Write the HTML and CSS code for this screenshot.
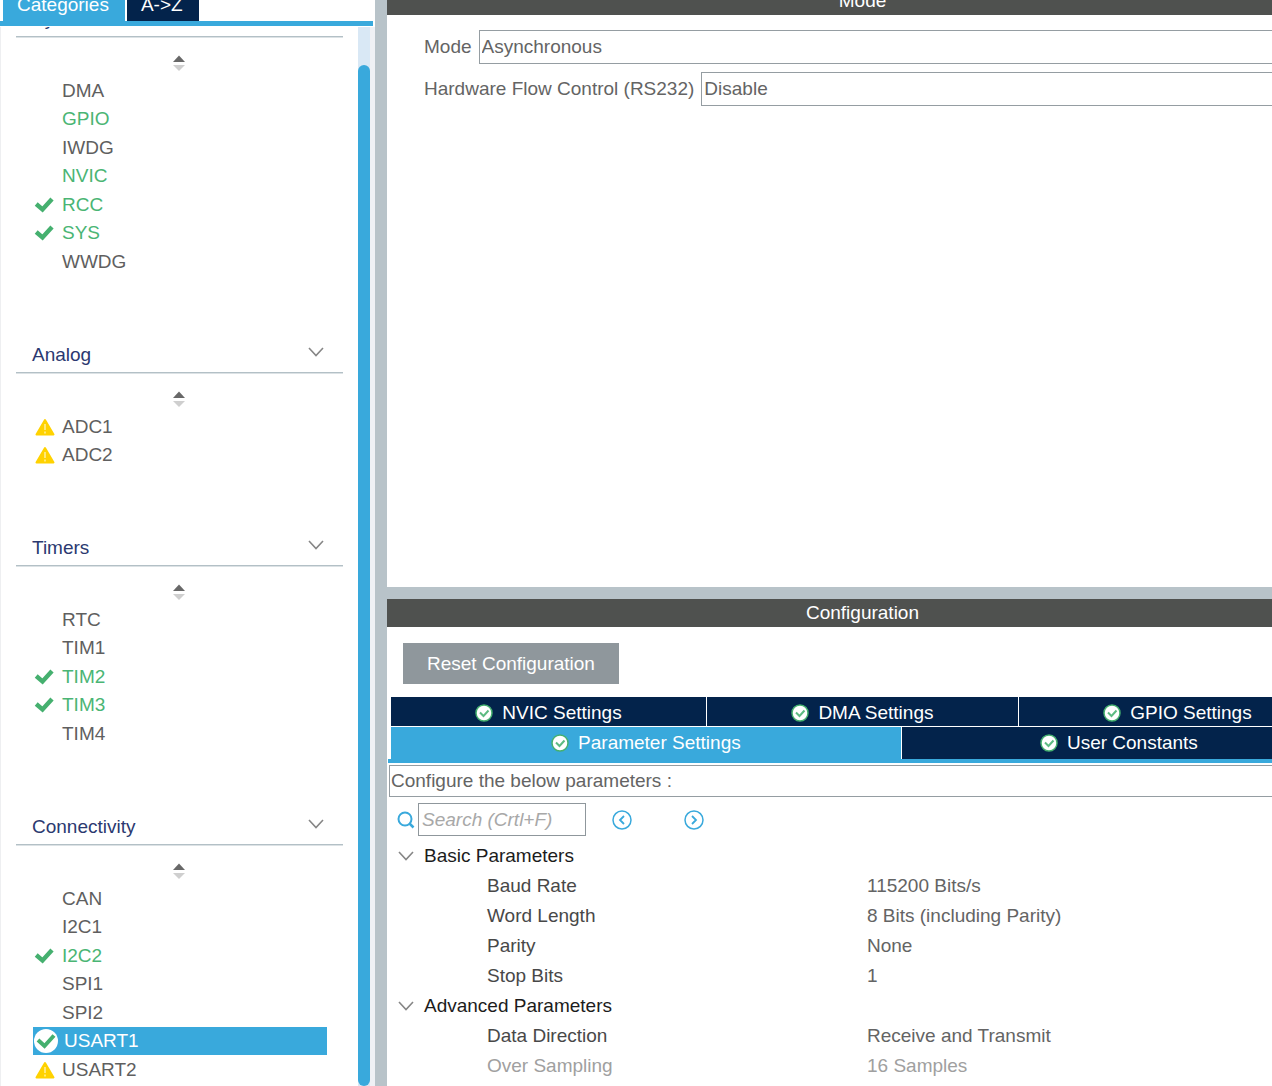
FILE: index.html
```html
<!DOCTYPE html>
<html lang="en">
<head>
<meta charset="utf-8">
<title>USART1 Mode and Configuration</title>
<link rel="stylesheet" href="styles.css">
</head>
<body>
<svg class="sprite" aria-hidden="true">
  <symbol id="check" viewBox="0 0 20 16"><path d="M2.200 7L8.500 12.500L18 2" fill="none" stroke="#45b06f" stroke-width="4.400"/></symbol>
  <symbol id="warn" viewBox="0 0 20 18"><path d="M10 2L18.500 16.500H1.500Z" fill="#ffd200" stroke="#ffd200" stroke-width="2" stroke-linejoin="round"/><path d="M10 6V12M10 13.500V15.500" stroke="#fff0a0" stroke-width="1.500"/></symbol>
  <symbol id="check-disc" viewBox="0 0 24 24"><circle cx="12" cy="12" r="12" fill="#fff"/><path d="M4 11L10.500 17L20 6.500" fill="none" stroke="#45b06f" stroke-width="4"/></symbol>
  <symbol id="ok" viewBox="0 0 18 18"><circle cx="9" cy="9" r="8" fill="#fff" stroke="#45b06f" stroke-width="1.500"/><path d="M5 8.500L8.500 12L13.500 6.500" fill="none" stroke="#5dbb82" stroke-width="2"/></symbol>
  <symbol id="chevron" viewBox="0 0 16 10"><path d="M1 1L8 8.500L15 1" fill="none" stroke="#868686" stroke-width="1.600"/></symbol>
  <symbol id="sort" viewBox="0 0 14 16"><path d="M1 7L7 0.500L13 7Z" fill="#686868"/><path d="M1 10L7 16L13 10Z" fill="#cfcfcf"/></symbol>
  <symbol id="search" viewBox="0 0 18 18"><circle cx="8" cy="8" r="6.500" fill="none" stroke="#39a9dc" stroke-width="2"/><path d="M12.500 12.500L16.500 16.500" stroke="#39a9dc" stroke-width="2.500"/></symbol>
  <symbol id="prev" viewBox="0 0 20 20"><circle cx="10" cy="10" r="9" fill="none" stroke="#39a9dc" stroke-width="1.500"/><path d="M12 6L8 10L12 14" fill="none" stroke="#39a9dc" stroke-width="1.800"/></symbol>
  <symbol id="next" viewBox="0 0 20 20"><circle cx="10" cy="10" r="9" fill="none" stroke="#39a9dc" stroke-width="1.500"/><path d="M8 6L12 10L8 14" fill="none" stroke="#39a9dc" stroke-width="1.800"/></symbol>
</svg>
<div class="app">
  <aside class="sidebar">
    <div class="side-tabs">
      <button class="side-tab active">Categories</button>
      <button class="side-tab">A-&gt;Z</button>
    </div>
    <div class="side-body">
      <nav class="categories">
        <section class="category">
          <h2 class="category-head">System Core <svg class="chevron"><use href="#chevron"/></svg></h2>
          <div class="sort"><svg class="sort-icon"><use href="#sort"/></svg></div>
          <ul class="items">
            <li><a class="item" href="#dma">DMA</a></li>
            <li><a class="item on" href="#gpio">GPIO</a></li>
            <li><a class="item" href="#iwdg">IWDG</a></li>
            <li><a class="item on" href="#nvic">NVIC</a></li>
            <li><a class="item on" href="#rcc"><svg class="check"><use href="#check"/></svg>RCC</a></li>
            <li><a class="item on" href="#sys"><svg class="check"><use href="#check"/></svg>SYS</a></li>
            <li><a class="item" href="#wwdg">WWDG</a></li>
          </ul>
        </section>
        <section class="category">
          <h2 class="category-head">Analog <svg class="chevron"><use href="#chevron"/></svg></h2>
          <div class="sort"><svg class="sort-icon"><use href="#sort"/></svg></div>
          <ul class="items">
            <li><a class="item" href="#adc1"><svg class="warn"><use href="#warn"/></svg>ADC1</a></li>
            <li><a class="item" href="#adc2"><svg class="warn"><use href="#warn"/></svg>ADC2</a></li>
          </ul>
        </section>
        <section class="category">
          <h2 class="category-head">Timers <svg class="chevron"><use href="#chevron"/></svg></h2>
          <div class="sort"><svg class="sort-icon"><use href="#sort"/></svg></div>
          <ul class="items">
            <li><a class="item" href="#rtc">RTC</a></li>
            <li><a class="item" href="#tim1">TIM1</a></li>
            <li><a class="item on" href="#tim2"><svg class="check"><use href="#check"/></svg>TIM2</a></li>
            <li><a class="item on" href="#tim3"><svg class="check"><use href="#check"/></svg>TIM3</a></li>
            <li><a class="item" href="#tim4">TIM4</a></li>
          </ul>
        </section>
        <section class="category">
          <h2 class="category-head">Connectivity <svg class="chevron"><use href="#chevron"/></svg></h2>
          <div class="sort"><svg class="sort-icon"><use href="#sort"/></svg></div>
          <ul class="items">
            <li><a class="item" href="#can">CAN</a></li>
            <li><a class="item" href="#i2c1">I2C1</a></li>
            <li><a class="item on" href="#i2c2"><svg class="check"><use href="#check"/></svg>I2C2</a></li>
            <li><a class="item" href="#spi1">SPI1</a></li>
            <li><a class="item" href="#spi2">SPI2</a></li>
            <li><a class="item selected" href="#usart1"><svg class="disc"><use href="#check-disc"/></svg>USART1</a></li>
            <li><a class="item" href="#usart2"><svg class="warn"><use href="#warn"/></svg>USART2</a></li>
          </ul>
        </section>
      </nav>
      <div class="scroll-track"><div class="scroll-thumb"></div></div>
    </div>
  </aside>

  <main class="main">
    <section class="mode-panel">
      <h1 class="panel-title">Mode</h1>
      <div class="mode-form">
        <div class="field">
          <label for="mode">Mode</label>
          <select id="mode" class="select"><option>Asynchronous</option></select>
        </div>
        <div class="field">
          <label for="flow">Hardware Flow Control (RS232)</label>
          <select id="flow" class="select"><option>Disable</option></select>
        </div>
      </div>
    </section>

    <section class="config-panel">
      <h1 class="panel-title">Configuration</h1>
      <button class="reset">Reset Configuration</button>
      <div class="tabs">
        <div class="tab-row">
          <button class="tab"><svg class="ok"><use href="#ok"/></svg>NVIC Settings</button>
          <button class="tab"><svg class="ok"><use href="#ok"/></svg>DMA Settings</button>
          <button class="tab"><svg class="ok"><use href="#ok"/></svg>GPIO Settings</button>
        </div>
        <div class="tab-row front">
          <button class="tab active"><svg class="ok"><use href="#ok"/></svg>Parameter Settings</button>
          <button class="tab"><svg class="ok"><use href="#ok"/></svg>User Constants</button>
        </div>
      </div>
      <div class="params">
        <p class="hint">Configure the below parameters :</p>
        <div class="search-bar">
          <label class="search-label" for="search" aria-label="Search"><svg class="search-icon"><use href="#search"/></svg></label>
          <input id="search" class="search" type="text" placeholder="Search (Crtl+F)">
          <button class="step" aria-label="Previous"><svg class="step-icon"><use href="#prev"/></svg></button>
          <button class="step" aria-label="Next"><svg class="step-icon"><use href="#next"/></svg></button>
        </div>
        <table class="param-table">
          <colgroup><col class="name-col"><col></colgroup>
          <tbody>
            <tr><th class="group" colspan="2"><span class="group-label"><svg class="chevron"><use href="#chevron"/></svg>Basic Parameters</span></th></tr>
            <tr><th class="name">Baud Rate</th><td>115200 Bits/s</td></tr>
            <tr><th class="name">Word Length</th><td>8 Bits (including Parity)</td></tr>
            <tr><th class="name">Parity</th><td>None</td></tr>
            <tr><th class="name">Stop Bits</th><td>1</td></tr>
            <tr><th class="group" colspan="2"><span class="group-label"><svg class="chevron"><use href="#chevron"/></svg>Advanced Parameters</span></th></tr>
            <tr><th class="name">Data Direction</th><td>Receive and Transmit</td></tr>
            <tr class="disabled"><th class="name">Over Sampling</th><td>16 Samples</td></tr>
          </tbody>
        </table>
      </div>
    </section>
  </main>
</div>
</body>
</html>
```
FILE: styles.css
```css
* { box-sizing: border-box; }

body {
  margin: 0;
  font: 19px/28px "Liberation Sans", Arial, sans-serif;
  color: #646464;
  background: #fff;
}

button, input, select {
  font: inherit;
  color: inherit;
  border: 0;
  border-radius: 0;
  margin: 0;
  padding: 0;
  background: none;
}

h1, h2, p, ul { margin: 0; padding: 0; font-size: inherit; font-weight: normal; }
ul { list-style: none; }
svg { flex: none; display: block; }
.sprite { position: absolute; width: 0; height: 0; }

.app {
  display: grid;
  grid-template-columns: 375px 1fr;
  column-gap: 12px;
  height: 100vh;
  overflow: hidden;
  background: #b8c3c9;
}

/* Sidebar */
.sidebar {
  display: flex;
  flex-direction: column;
  min-height: 0;
  background: #fff;
}

.side-tabs {
  display: flex;
  align-items: flex-end;
  gap: 2px;
  flex: none;
  height: 26px;
  margin-right: 2px;
  padding-left: 3px;
  border-bottom: 5px solid #39a9dc;
  overflow: hidden;
}

.side-tab {
  flex: none;
  height: 32px;
  padding: 0 16px 0 14px;
  color: #fff;
  background: #03234b;
}
.side-tab.active { background: #39a9dc; }

.side-body {
  display: flex;
  flex: 1;
  min-height: 0;
  margin-top: 1px;
  padding-right: 5px;
  border-left: 1px solid #eeeff1;
  background: #eff1f5;
  overflow: hidden;
}

.categories {
  flex: 1;
  padding: 0 15px;
  background: #fff;
}
/* the list is scrolled part of the way past its first heading */
.category:first-child { margin-top: -27px; }
.category { padding-bottom: 60px; }

.category-head {
  display: flex;
  align-items: center;
  justify-content: space-between;
  height: 37px;
  padding: 2px 19px 0 16px;
  color: #2b3970;
  border-bottom: 1px solid #b3c0c6;
  box-shadow: 0 1px #dce2e5;
}
.category-head .chevron { margin-bottom: 6px; }
.chevron { width: 16px; height: 10px; }

.sort {
  display: flex;
  align-items: center;
  justify-content: center;
  height: 39px;
  padding: 13px 1px 0 0;
}
.sort-icon { width: 14px; height: 16px; }

.items {
  display: grid;
  grid-auto-rows: 29px 28px;
  padding: 0 16px 0 17px;
}

.item {
  display: flex;
  align-items: center;
  justify-content: flex-start;
  height: 100%;
  padding-left: 29px;
  color: #5f5f5f;
  text-decoration: none;
}
.item.on { color: #4ab574; }
.item:has(svg) { padding-left: 1px; }
.item.selected { color: #fff; background: #39a9dc; }
.check { width: 20px; height: 16px; margin-right: 8px; }
.warn { width: 20px; height: 18px; margin: 0 7px 0 1px; }
.disc { width: 24px; height: 24px; margin-right: 6px; }

.scroll-track {
  width: 12px;
  padding-top: 38px;
  background: #d9e8f5;
}
.scroll-thumb {
  height: 100%;
  border-radius: 6px;
  background: #39a9dc;
}

/* Main area: its panels run on past the window's right edge */
.main {
  display: flex;
  flex-direction: column;
  gap: 12px;
  min-width: 0;
  min-height: 0;
  margin-right: -66px;
}

.panel-title {
  height: 28px;
  color: #fff;
  background: #4f514f;
  text-align: center;
}

.mode-panel { flex: 1; background: #fff; }
.mode-panel .panel-title { margin-top: -13px; }

.mode-form {
  display: flex;
  flex-direction: column;
  gap: 8px;
  padding: 15px 0 0 37px;
}
.field { display: flex; align-items: center; gap: 7px; }
.select {
  flex: 1;
  height: 34px;
  padding: 0 2px;
  border: 1px solid #959da2;
  appearance: none;
}

.config-panel { flex: none; background: #fff; }

.reset {
  display: block;
  height: 41px;
  margin: 16px 16px 13px;
  padding: 0 24px;
  color: #fff;
  background: #8f979c;
}

.tabs {
  margin-left: 1px;
  border-bottom: 4px solid #39a9dc;
}
.tab-row {
  display: flex;
  gap: 1px;
  margin: 0 2px 1px 3px;
}
.tab-row.front { margin-bottom: 0; }
.tab {
  display: flex;
  flex: 1 1 auto;
  align-items: center;
  justify-content: center;
  gap: 9px;
  height: 29px;
  padding-top: 2px;
  color: #fff;
  background: #03234b;
}
.front .tab { height: 32px; padding: 0; flex: 0 1 46%; }
.front .tab.active { flex: 0 1 54%; background: #39a9dc; }
.ok { width: 18px; height: 18px; }

.params {
  padding: 2px 0 5px 2px;
}
.hint {
  height: 32px;
  padding: 1px;
  border: 1px solid #959da2;
}
.search-bar {
  display: flex;
  align-items: center;
  padding: 6px 0 5px 8px;
}
.search-icon { width: 18px; height: 18px; margin-right: 3px; }
.search {
  width: 168px;
  height: 33px;
  margin-right: 26px;
  padding: 0 3px;
  border: 1px solid #8f979c;
}
.search::placeholder { color: #a8a8a8; font-style: italic; opacity: 1; }
.step { margin-right: 52px; }
.step-icon { width: 20px; height: 20px; }

.param-table {
  width: 100%;
  border-collapse: collapse;
  table-layout: fixed;
}
.param-table tr { height: 30px; }
.param-table th, .param-table td { padding: 0; text-align: left; font-weight: normal; }
.name-col { width: 478px; }
.param-table .name { padding-left: 98px; color: #484848; }
.group { color: #1c1c1c; }
.group-label { display: flex; align-items: center; gap: 10px; padding-left: 9px; }
.param-table .disabled th, .disabled td { color: #a0a0a0; }
```
